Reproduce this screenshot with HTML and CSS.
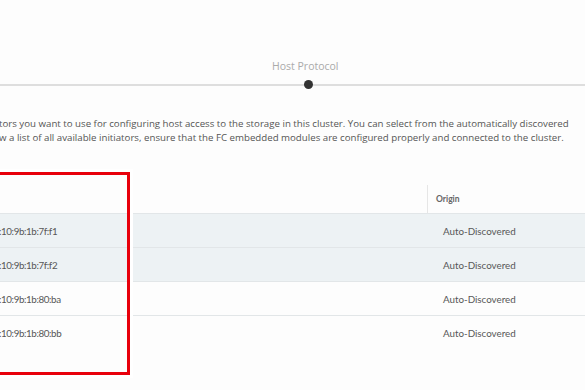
FILE: index.html
```html
<!DOCTYPE html>
<html lang="en">
<head>
  <meta charset="UTF-8">
  <meta name="viewport" content="width=device-width, initial-scale=1.0">
  <title>Host Protocol</title>
  <link rel="stylesheet" href="styles.css">
</head>
<body>

<div class="page">
  <div class="stepper">
    <div class="step-label">Host Protocol</div>
    <div class="step-track">
      <span class="step-dot"></span>
    </div>
  </div>

  <p class="desc">
    <span class="line">tors you want to use for configuring host access to the storage in this cluster. You can select from the automatically discovered</span>
    <span class="line">w a list of all available initiators, ensure that the FC embedded modules are configured properly and connected to the cluster.</span>
  </p>

  <div class="grid">
    <div class="grid-head">
      <div class="cell"></div>
      <div class="cell head-origin">Origin</div>
    </div>
    <div class="grid-row selected">
      <div class="cell wwpn">:10:9b:1b:7f:f1</div>
      <div class="cell origin">Auto-Discovered</div>
    </div>
    <div class="grid-row selected">
      <div class="cell wwpn">:10:9b:1b:7f:f2</div>
      <div class="cell origin">Auto-Discovered</div>
    </div>
    <div class="grid-row">
      <div class="cell wwpn">:10:9b:1b:80:ba</div>
      <div class="cell origin">Auto-Discovered</div>
    </div>
    <div class="grid-row last">
      <div class="cell wwpn">:10:9b:1b:80:bb</div>
      <div class="cell origin">Auto-Discovered</div>
    </div>
  </div>

  <div class="highlight"></div>
</div>

</body>
</html>
```

FILE: styles.css
```css
body {
  margin: 0;
  background-color: #fdfdfd;
  font-family: Lato, "Open Sans", sans-serif;
  color: #555;
  overflow: hidden;
}
.page {
  position: relative;
  width: 585px;
  height: 390px;
}
.stepper {
  padding-top: 58px;
}
.step-label {
  margin-left: 272px;
  font-family: "Open Sans", sans-serif;
  font-size: 10.5px;
  line-height: 16px;
  color: #aaa;
}
.step-track {
  position: relative;
  height: 2px;
  margin-top: 10px;
  background-color: #dedede;
}
.step-dot {
  position: absolute;
  left: 304px;
  top: -4px;
  width: 9px;
  height: 9px;
  border-radius: 50%;
  background-color: #333;
}
.desc {
  margin: 31px 0 0 -1px;
  font-family: "Open Sans", sans-serif;
  font-size: 9.7px;
  line-height: 14px;
  color: #555;
  white-space: nowrap;
}
.desc .line {
  display: block;
}
.grid {
  margin-top: 35px;
}
.grid-head,
.grid-row {
  display: grid;
  grid-template-columns: 427px 1fr;
  height: 33px;
}
.grid-row {
  align-items: center;
  border-top: 1px solid #e2e6e8;
  font-size: 9.8px;
  color: #575757;
}
.grid-row.selected {
  background-color: #edf2f4;
}
.grid-head {
  align-items: end;
  font-size: 8.5px;
  font-weight: bold;
  color: #666;
}
.head-origin {
  height: 28px;
  line-height: 28px;
  padding-left: 8px;
  border-left: 1px solid #e6e6e6;
}
.wwpn {
  margin-left: -1px;
  letter-spacing: -0.4px;
}
.origin {
  padding-left: 16px;
}
.highlight {
  position: absolute;
  left: -10px;
  top: 172px;
  width: 134px;
  height: 197px;
  border: 3px solid #e8000b;
  box-shadow: 0 0 0 3px #fff;
}
```
